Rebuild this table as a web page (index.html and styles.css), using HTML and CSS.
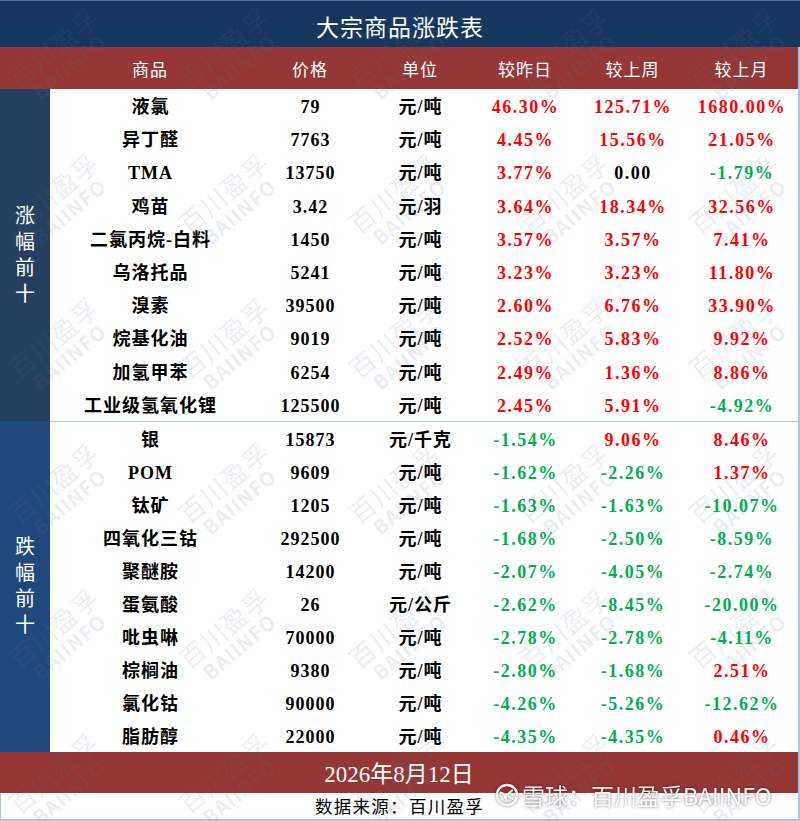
FILE: index.html
```html
<!DOCTYPE html>
<html lang="zh">
<head>
<meta charset="utf-8">
<title>大宗商品涨跌表</title>
<link rel="stylesheet" href="styles.css">
</head>
<body>
<div class="page">
  <div class="title">大宗商品涨跌表</div>
  <div class="frame">
    <div class="head">
      <div class="hside"></div>
      <div class="row hrow">
        <div>商品</div><div>价格</div><div>单位</div><div>较昨日</div><div>较上周</div><div>较上月</div>
      </div>
    </div>

    <div class="group up">
      <div class="side-label">涨幅前十</div>
      <div class="rows">
        <div class="row"><div>液氯</div><div>79</div><div>元/吨</div><div class="r">46.30%</div><div class="r">125.71%</div><div class="r">1680.00%</div></div>
        <div class="row"><div>异丁醛</div><div>7763</div><div>元/吨</div><div class="r">4.45%</div><div class="r">15.56%</div><div class="r">21.05%</div></div>
        <div class="row"><div>TMA</div><div>13750</div><div>元/吨</div><div class="r">3.77%</div><div>0.00</div><div class="g">-1.79%</div></div>
        <div class="row"><div>鸡苗</div><div>3.42</div><div>元/羽</div><div class="r">3.64%</div><div class="r">18.34%</div><div class="r">32.56%</div></div>
        <div class="row"><div>二氯丙烷-白料</div><div>1450</div><div>元/吨</div><div class="r">3.57%</div><div class="r">3.57%</div><div class="r">7.41%</div></div>
        <div class="row"><div>乌洛托品</div><div>5241</div><div>元/吨</div><div class="r">3.23%</div><div class="r">3.23%</div><div class="r">11.80%</div></div>
        <div class="row"><div>溴素</div><div>39500</div><div>元/吨</div><div class="r">2.60%</div><div class="r">6.76%</div><div class="r">33.90%</div></div>
        <div class="row"><div>烷基化油</div><div>9019</div><div>元/吨</div><div class="r">2.52%</div><div class="r">5.83%</div><div class="r">9.92%</div></div>
        <div class="row"><div>加氢甲苯</div><div>6254</div><div>元/吨</div><div class="r">2.49%</div><div class="r">1.36%</div><div class="r">8.86%</div></div>
        <div class="row"><div>工业级氢氧化锂</div><div>125500</div><div>元/吨</div><div class="r">2.45%</div><div class="r">5.91%</div><div class="g">-4.92%</div></div>
      </div>
    </div>

    <div class="group down">
      <div class="side-label">跌幅前十</div>
      <div class="rows">
        <div class="row"><div>银</div><div>15873</div><div>元/千克</div><div class="g">-1.54%</div><div class="r">9.06%</div><div class="r">8.46%</div></div>
        <div class="row"><div>POM</div><div>9609</div><div>元/吨</div><div class="g">-1.62%</div><div class="g">-2.26%</div><div class="r">1.37%</div></div>
        <div class="row"><div>钛矿</div><div>1205</div><div>元/吨</div><div class="g">-1.63%</div><div class="g">-1.63%</div><div class="g">-10.07%</div></div>
        <div class="row"><div>四氧化三钴</div><div>292500</div><div>元/吨</div><div class="g">-1.68%</div><div class="g">-2.50%</div><div class="g">-8.59%</div></div>
        <div class="row"><div>聚醚胺</div><div>14200</div><div>元/吨</div><div class="g">-2.07%</div><div class="g">-4.05%</div><div class="g">-2.74%</div></div>
        <div class="row"><div>蛋氨酸</div><div>26</div><div>元/公斤</div><div class="g">-2.62%</div><div class="g">-8.45%</div><div class="g">-20.00%</div></div>
        <div class="row"><div>吡虫啉</div><div>70000</div><div>元/吨</div><div class="g">-2.78%</div><div class="g">-2.78%</div><div class="g">-4.11%</div></div>
        <div class="row"><div>棕榈油</div><div>9380</div><div>元/吨</div><div class="g">-2.80%</div><div class="g">-1.68%</div><div class="r">2.51%</div></div>
        <div class="row"><div>氯化钴</div><div>90000</div><div>元/吨</div><div class="g">-4.26%</div><div class="g">-5.26%</div><div class="g">-12.62%</div></div>
        <div class="row"><div>脂肪醇</div><div>22000</div><div>元/吨</div><div class="g">-4.35%</div><div class="g">-4.35%</div><div class="r">0.46%</div></div>
      </div>
    </div>

    <div class="date">2026年8月12日</div>
    <div class="source">数据来源：百川盈孚</div>
  </div>

  <div class="wm-layer" aria-hidden="true">
    <div class="wm"><span class="wm-cn">百川盈孚</span><span class="wm-en">BAIINFO</span></div>
    <div class="wm"><span class="wm-cn">百川盈孚</span><span class="wm-en">BAIINFO</span></div>
    <div class="wm"><span class="wm-cn">百川盈孚</span><span class="wm-en">BAIINFO</span></div>
    <div class="wm"><span class="wm-cn">百川盈孚</span><span class="wm-en">BAIINFO</span></div>
    <div class="wm"><span class="wm-cn">百川盈孚</span><span class="wm-en">BAIINFO</span></div>
    <div class="wm"><span class="wm-cn">百川盈孚</span><span class="wm-en">BAIINFO</span></div>
    <div class="wm"><span class="wm-cn">百川盈孚</span><span class="wm-en">BAIINFO</span></div>
    <div class="wm"><span class="wm-cn">百川盈孚</span><span class="wm-en">BAIINFO</span></div>
    <div class="wm"><span class="wm-cn">百川盈孚</span><span class="wm-en">BAIINFO</span></div>
    <div class="wm"><span class="wm-cn">百川盈孚</span><span class="wm-en">BAIINFO</span></div>
    <div class="wm"><span class="wm-cn">百川盈孚</span><span class="wm-en">BAIINFO</span></div>
    <div class="wm"><span class="wm-cn">百川盈孚</span><span class="wm-en">BAIINFO</span></div>
    <div class="wm"><span class="wm-cn">百川盈孚</span><span class="wm-en">BAIINFO</span></div>
    <div class="wm"><span class="wm-cn">百川盈孚</span><span class="wm-en">BAIINFO</span></div>
    <div class="wm"><span class="wm-cn">百川盈孚</span><span class="wm-en">BAIINFO</span></div>
    <div class="wm"><span class="wm-cn">百川盈孚</span><span class="wm-en">BAIINFO</span></div>
    <div class="wm"><span class="wm-cn">百川盈孚</span><span class="wm-en">BAIINFO</span></div>
    <div class="wm"><span class="wm-cn">百川盈孚</span><span class="wm-en">BAIINFO</span></div>
    <div class="wm"><span class="wm-cn">百川盈孚</span><span class="wm-en">BAIINFO</span></div>
    <div class="wm"><span class="wm-cn">百川盈孚</span><span class="wm-en">BAIINFO</span></div>
    <div class="wm"><span class="wm-cn">百川盈孚</span><span class="wm-en">BAIINFO</span></div>
    <div class="wm"><span class="wm-cn">百川盈孚</span><span class="wm-en">BAIINFO</span></div>
    <div class="wm"><span class="wm-cn">百川盈孚</span><span class="wm-en">BAIINFO</span></div>
    <div class="wm"><span class="wm-cn">百川盈孚</span><span class="wm-en">BAIINFO</span></div>
    <div class="wm"><span class="wm-cn">百川盈孚</span><span class="wm-en">BAIINFO</span></div>
    <div class="wm"><span class="wm-cn">百川盈孚</span><span class="wm-en">BAIINFO</span></div>
    <div class="wm"><span class="wm-cn">百川盈孚</span><span class="wm-en">BAIINFO</span></div>
    <div class="wm"><span class="wm-cn">百川盈孚</span><span class="wm-en">BAIINFO</span></div>
    <div class="wm"><span class="wm-cn">百川盈孚</span><span class="wm-en">BAIINFO</span></div>
    <div class="wm"><span class="wm-cn">百川盈孚</span><span class="wm-en">BAIINFO</span></div>
  </div>

  <div class="xq">
    <svg class="xq-logo" viewBox="0 0 24 24" width="24" height="24">
      <circle cx="12" cy="12" r="10" fill="none" stroke="#fff" stroke-width="2.4"/>
      <path d="M5.5 9.5 C9 10 11 12.5 11.5 17.5" fill="none" stroke="#fff" stroke-width="2.2" stroke-linecap="round"/>
      <path d="M10 14 L17 7.5" fill="none" stroke="#fff" stroke-width="2.2" stroke-linecap="round"/>
      <path d="M13.5 13.5 C15 15 16.5 16 18.5 15.5" fill="none" stroke="#fff" stroke-width="2.2" stroke-linecap="round"/>
    </svg>
    <span class="xq-text">雪球：百川盈孚BAIINFO</span>
  </div>
</div>
</body>
</html>
```

FILE: styles.css
```css
* { box-sizing: border-box; }
html, body { margin: 0; padding: 0; background: #fff; }

.page {
  position: relative;
  width: 800px;
  height: 821px;
  overflow: hidden;
  font-family: "Liberation Serif", "Noto Sans CJK SC", serif;
}

.title {
  height: 47px;
  background: #17375e;
  border-top: 1px solid #4f6f99;
  color: #fff;
  font-family: "Noto Sans CJK SC", sans-serif;
  font-size: 23px;
  letter-spacing: 1px;
  display: flex;
  align-items: center;
  justify-content: center;
  padding-top: 3px;
}

.frame {
  border-right: 2px solid #a9c6e8;
}

.head {
  display: flex;
  height: 42px;
  background: #953735;
  color: #fff;
}
.hside { width: 50px; }
.hrow {
  height: 42px;
  font-family: "Noto Sans CJK SC", sans-serif;
  font-size: 17px;
  letter-spacing: 1px;
  padding-top: 1px;
}

.group { display: flex; }
.side-label {
  width: 50px;
  display: flex;
  align-items: center;
  justify-content: center;
  color: #fff;
  font-family: "Noto Sans CJK SC", sans-serif;
  font-size: 20px;
  writing-mode: vertical-rl;
  text-orientation: upright;
  letter-spacing: 6px;
  padding-top: 4px;
}
.up .side-label { background: #243f60; }
.down .side-label { background: #1f497d; }

.rows { flex: 1; background: #fff; }
.down .rows { border-top: 1px solid #a9c6e8; }

.row {
  display: grid;
  grid-template-columns: 200px 120px 100px 110px 105px 113px;
  align-items: center;
  text-align: center;
  white-space: nowrap;
}
.up .row { height: 33.2px; }
.down .row { height: 33px; }
.rows .row {
  font-size: 18px;
  font-weight: bold;
  letter-spacing: 1px;
  color: #000;
}
.rows .row > div {
  padding-left: 1px;
  padding-top: 2px;
  line-height: 33px;
  height: 33px;
}
.rows .row > div:nth-child(n+4) { letter-spacing: 1.5px; }

.r { color: #ff0000; }
.g { color: #00b050; }

.date {
  height: 41px;
  background: #953735;
  color: #fff;
  font-size: 23px;
  display: flex;
  align-items: center;
  justify-content: center;
}

.source {
  height: 28px;
  border-left: 1px solid #a9c6e8;
  border-bottom: 2px solid #a9c6e8;
  font-family: "Noto Sans CJK SC", sans-serif;
  font-size: 17.5px;
  letter-spacing: 1.3px;
  color: #000;
  display: flex;
  align-items: center;
  justify-content: center;
}

/* watermark overlay */
.wm-layer {
  position: absolute;
  left: -25px;
  top: -17px;
  display: grid;
  grid-template-columns: repeat(5, 170px);
  grid-auto-rows: 145px;
  pointer-events: none;
}
.wm {
  display: flex;
  flex-direction: column;
  align-items: center;
  justify-content: center;
  transform: rotate(-40deg);
  color: rgba(90, 115, 150, 0.13);
  font-family: "Noto Sans CJK SC", sans-serif;
  line-height: 1.05;
}
.wm-cn { font-size: 26px; letter-spacing: 1px; }
.wm-en { font-size: 20px; font-weight: bold; letter-spacing: 1px; }

/* xueqiu watermark */
.xq {
  position: absolute;
  left: 495px;
  top: 781px;
  display: flex;
  align-items: center;
  gap: 3px;
  pointer-events: none;
  filter: drop-shadow(0 0 1.5px rgba(0, 0, 0, 0.55));
}
.xq-logo { display: block; opacity: 0.92; }
.xq-text {
  color: rgba(255, 255, 255, 0.92);
  font-family: "Noto Sans CJK SC", sans-serif;
  font-size: 23px;
  line-height: 28px;
  letter-spacing: 0;
}
```
